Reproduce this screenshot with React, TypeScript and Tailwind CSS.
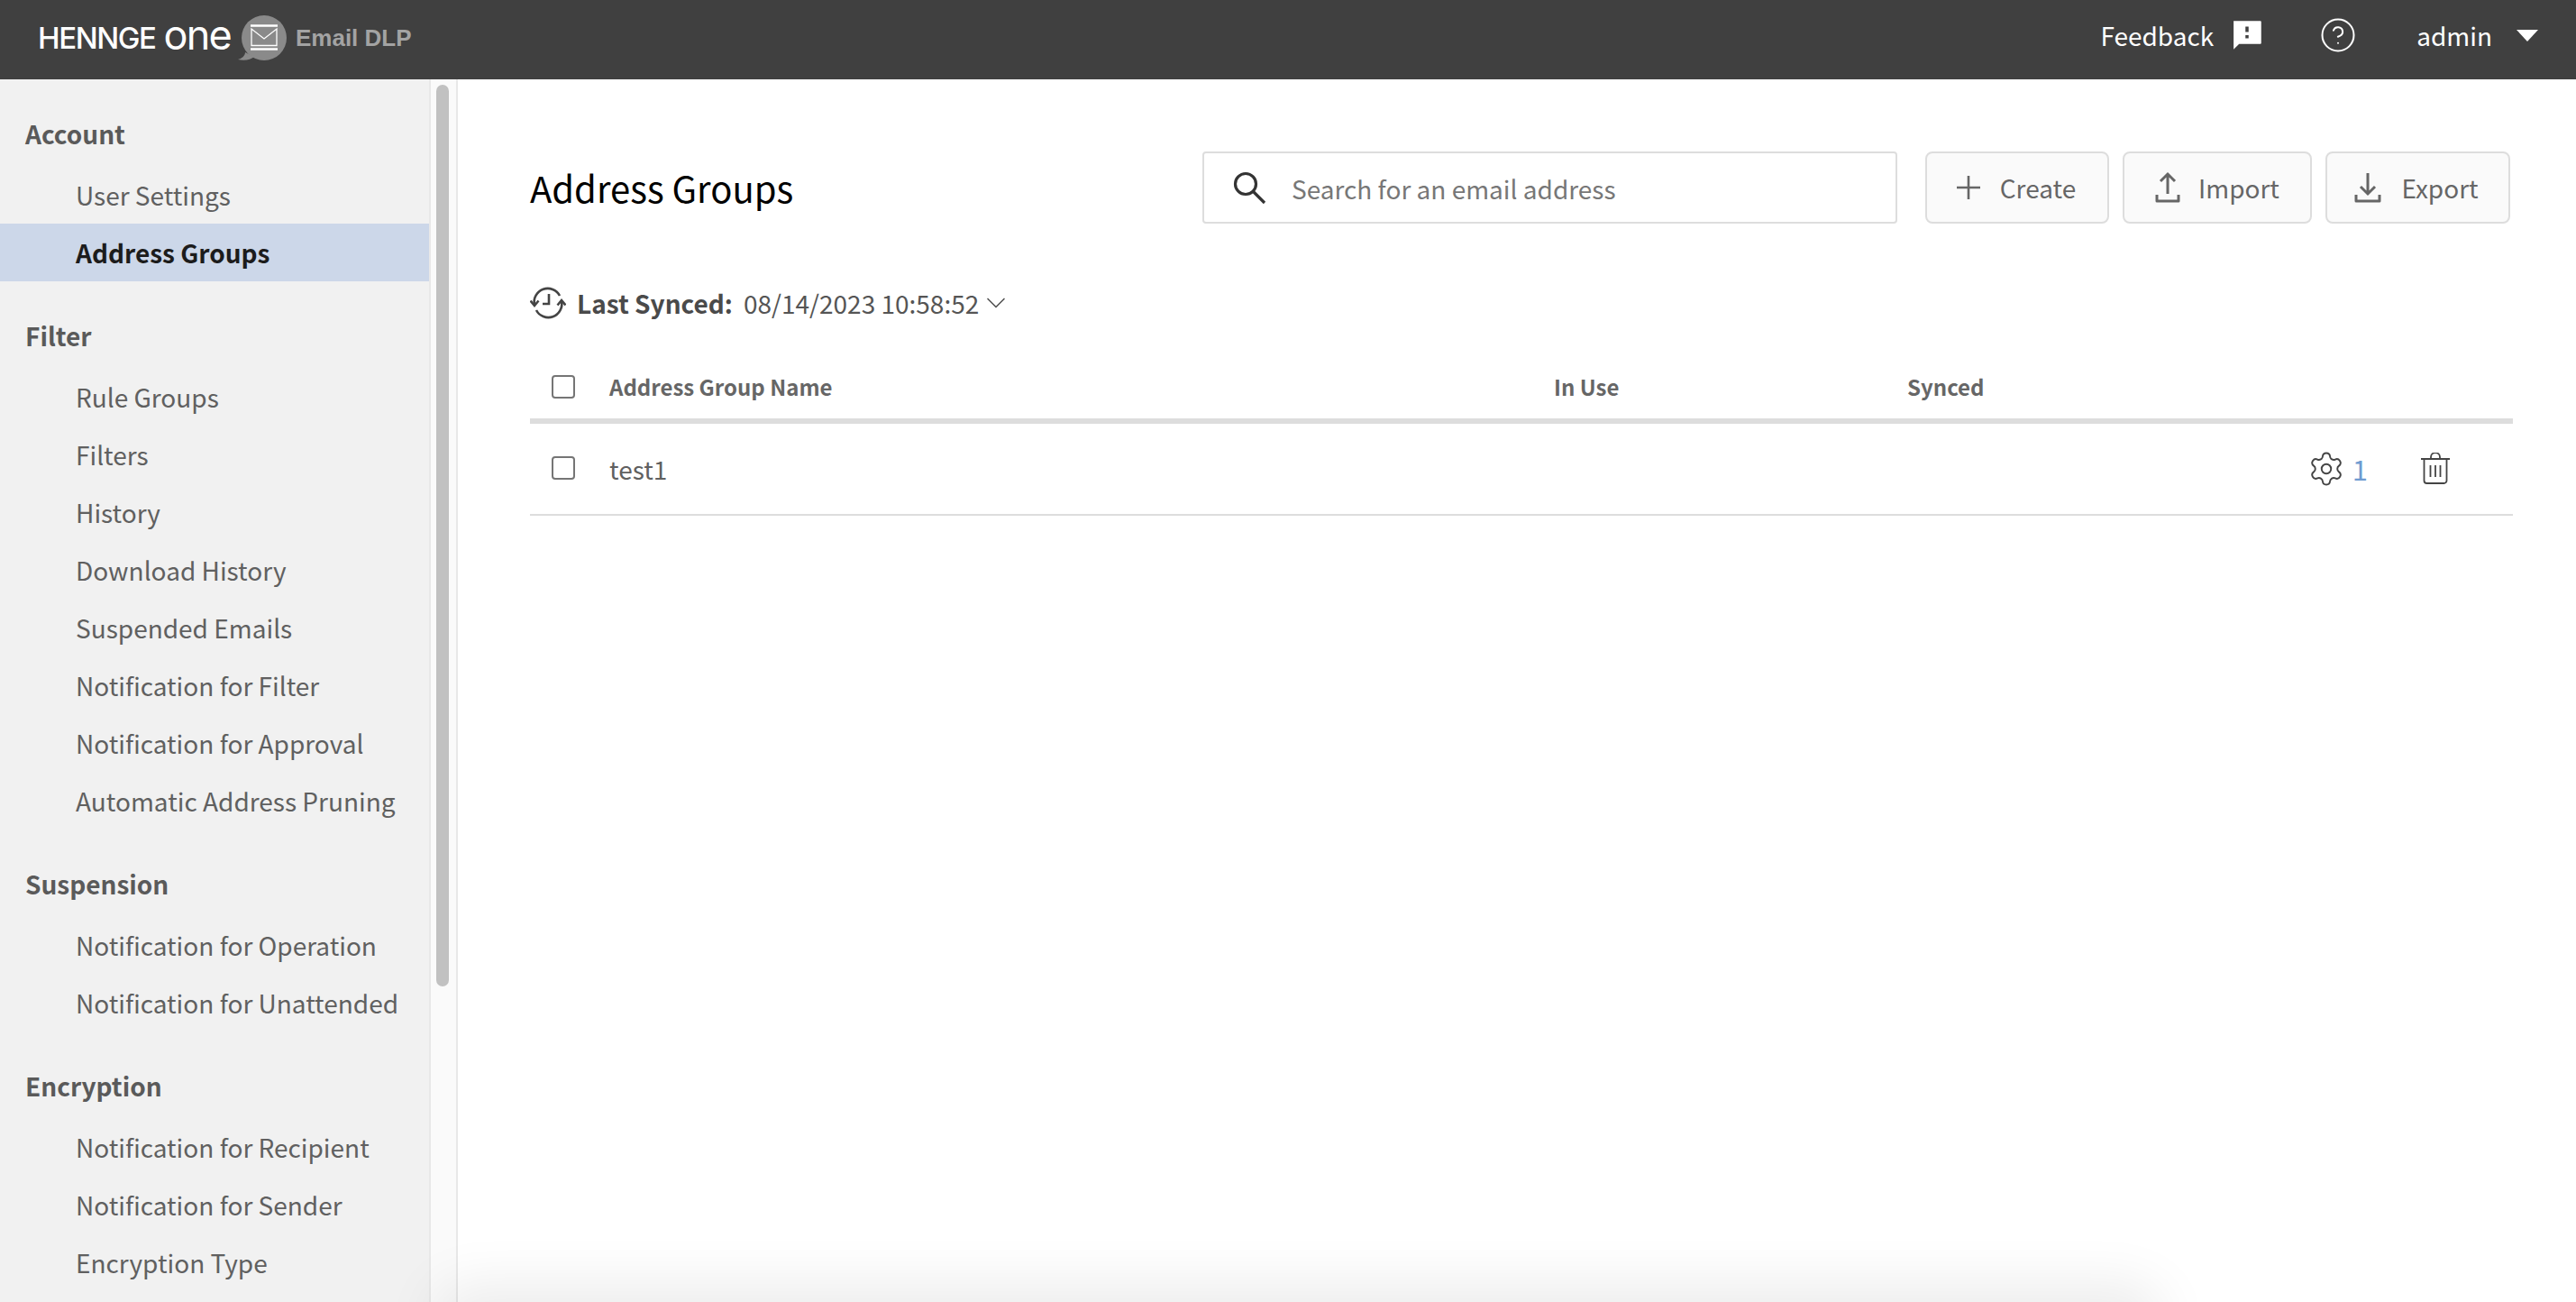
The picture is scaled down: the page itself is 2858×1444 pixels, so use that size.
import React from 'react'
import { ChevronDown, CircleHelp, Settings } from 'lucide-react'

const NAV = [
  { title: 'Account', items: ['User Settings', 'Address Groups'] },
  {
    title: 'Filter',
    items: [
      'Rule Groups',
      'Filters',
      'History',
      'Download History',
      'Suspended Emails',
      'Notification for Filter',
      'Notification for Approval',
      'Automatic Address Pruning',
    ],
  },
  { title: 'Suspension', items: ['Notification for Operation', 'Notification for Unattended'] },
  { title: 'Encryption', items: ['Notification for Recipient', 'Notification for Sender', 'Encryption Type'] },
]

const FONT = "font-['Noto_Sans_CJK_JP','Noto_Sans',sans-serif]"

const Logo = () => (
  <div className="flex items-center">
    <span className="font-['Inter',sans-serif] text-[33px] font-medium leading-none tracking-[-1.4px] text-white">HENNGE</span>
    <span className="ml-[9px] mt-[-7px] font-['Inter',sans-serif] text-[45px] font-normal leading-none tracking-[-1.8px] text-white">one</span>
    <svg width="54" height="54" viewBox="0 0 54 54" className="ml-[8px] mt-[2px]">
      <circle cx="29" cy="26" r="25" fill="#8a8a8a" />
      <path d="M8 42 C8 46 4 49 0 50 C8 52 14 50 18 47 Z" fill="#8a8a8a" />
      <path d="M14 12.5 H44 M14 38.5 H44" stroke="#fff" strokeWidth="2.6" />
      <path d="M15 16 V34.5 H43 V16 L29 27 Z" fill="none" stroke="#fff" strokeWidth="1.3" />
    </svg>
    <span className="ml-[10px] font-['Liberation_Sans',sans-serif] text-[26px] font-bold leading-none text-[#a3a3a3]">Email DLP</span>
  </div>
)

const Header = () => (
  <header className="flex h-[88px] shrink-0 items-center justify-between bg-[#404040] pb-[4px] pl-[42px] pr-[42px] text-white">
    <Logo />
    <div className="mb-[6px] flex items-center">
      <span className="text-[28px] leading-none">Feedback</span>
      <svg width="42" height="42" viewBox="0 0 24 24" fill="#fff" className="ml-[16px]">
        <path d="M20.5 3H3.5v18l3.500-3.500h13.500c.3 0 .5-.2.5-.5V3.500c0-.3-.2-.5-.5-.5zM13 14h-2v-2h2v2zm0-4h-2V6.500h2V10z" />
      </svg>
      <CircleHelp size={42} strokeWidth={1.15} className="ml-[59px]" />
      <span className="ml-[66px] text-[28px] leading-none">admin</span>
      <svg width="24" height="14" viewBox="0 0 24 14" fill="#fff" className="ml-[27px]">
        <path d="M0 1 H24 L12 14 Z" />
      </svg>
    </div>
  </header>
)

const Sidebar = () => (
  <aside className="flex w-[508px] shrink-0 overflow-hidden">
    <nav className="w-[476px] bg-[#f1f1f1] pt-[27px]">
      {NAV.map((group) => (
        <div key={group.title} className="mb-[27px]">
          <div className="mb-[3px] flex h-[66px] items-center pl-[28px] text-[28px] font-bold text-[#5a5a5a]">{group.title}</div>
          {group.items.map((item) =>
            item === 'Address Groups' ? (
              <div key={item} className="flex h-[64px] items-center bg-[#ccd7e9] pl-[84px] text-[28px] font-bold text-[#1c1c1c]">
                {item}
              </div>
            ) : (
              <div key={item} className="flex h-[64px] items-center pl-[84px] text-[28px] text-[#606060]">
                {item}
              </div>
            ),
          )}
        </div>
      ))}
    </nav>
    <div className="w-[32px] border-l-2 border-r-2 border-[#e8e8e8] bg-[#fafafa] pl-[6px] pt-[6px]">
      <div className="h-[1000px] w-[14px] rounded-full bg-[#c1c1c1]" />
    </div>
  </aside>
)

const ToolButton = ({ icon, label, width }: { icon: React.ReactNode; label: string; width: string }) => (
  <button className={`flex h-[80px] items-center justify-center gap-[20px] rounded-[8px] border-2 border-[#dddddd] bg-[#fafafa] text-[28px] text-[#666666] ${width}`}>
    {icon}
    {label}
  </button>
)

const Checkbox = () => <span className="block h-[26px] w-[26px] rounded-[4px] border-2 border-[#757575] bg-white" />

const AddressGroups = () => (
  <main className="relative flex-1 bg-white pl-[80px] pr-[70px] pt-[80px]">
    <div className="flex h-[80px] items-center">
      <h1 className="text-[40px] font-normal leading-none text-black">Address Groups</h1>
      <div className="ml-auto flex h-[80px] w-[771px] items-center rounded-[4px] border-2 border-[#dddddd] bg-white pl-[31px]">
        <svg width="38" height="38" viewBox="0 0 38 38" fill="none" stroke="#333" strokeWidth="3.2">
          <circle cx="15" cy="15" r="11.500" />
          <path d="M23.500 23.500 L36 36" />
        </svg>
        <span className="ml-[28px] pt-[2px] text-[28px] text-[#777777]">Search for an email address</span>
      </div>
      <div className="ml-[31px] mr-[3px] flex gap-[15px]">
        <ToolButton
          label="Create"
          width="w-[204px]"
          icon={
            <svg width="26" height="26" viewBox="0 0 26 26" stroke="#666" strokeWidth="2.600" className="ml-[-2px] mr-[2px]">
              <path d="M13 0 V26 M0 13 H26" />
            </svg>
          }
        />
        <ToolButton
          label="Import"
          width="w-[210px]"
          icon={
            <svg width="28" height="36" viewBox="0 0 28 36" fill="none" stroke="#666" strokeWidth="3">
              <path d="M14 25 V3 M6 11 L14 3 L22 11" />
              <path d="M2 26 V33 H26 V26" strokeLinejoin="round" />
            </svg>
          }
        />
        <ToolButton
          label="Export"
          width="w-[205px]"
          icon={
            <svg width="30" height="36" viewBox="0 0 30 36" fill="none" stroke="#666" strokeWidth="3" className="ml-[-3px] mr-[2px]">
              <path d="M15 2 V25 M7 17 L15 25 L23 17" />
              <path d="M2 26 V33 H28 V26" strokeLinejoin="round" />
            </svg>
          }
        />
      </div>
    </div>

    <div className="mt-[68px] flex h-[40px] items-center">
      <svg width="40" height="40" viewBox="0 0 40 40" fill="none" stroke="#444" strokeWidth="2.600">
        <path d="M5 22 A15 15 0 0 1 33 12" />
        <path d="M35 18 A15 15 0 0 1 7 28" />
        <path d="M0.500 17.500 L5 23 L9.500 17.500 M30.500 22.500 L35 17 L39.500 22.500" />
        <path d="M21 10 V21 H14" />
      </svg>
      <span className="ml-[12px] text-[28px] font-bold text-[#4a4a4a]">Last Synced:</span>
      <span className="ml-[12px] text-[28px] text-[#555555]">08/14/2023 10:58:52</span>
      <ChevronDown size={36} strokeWidth={1.1} color="#555" className="ml-[1px]" />
    </div>

    <div className="mt-[37px] grid h-[77px] grid-cols-[88px_1048px_392px_1fr] items-center border-b-[6px] border-[#dddddd] text-[24px] font-bold text-[#666666]">
      <span className="pl-[24px]">
        <Checkbox />
      </span>
      <span>Address Group Name</span>
      <span>In Use</span>
      <span>Synced</span>
    </div>
    <div className="grid h-[102px] grid-cols-[88px_1048px_392px_1fr] items-center border-b-2 border-[#dddddd] text-[28px] text-[#606060]">
      <span className="pb-[2px] pl-[24px]">
        <Checkbox />
      </span>
      <span>test1</span>
      <span />
      <span className="flex items-center justify-end pr-[69px]">
        <Settings size={42} strokeWidth={1.1} color="#444" />
        <span className="ml-[8px] text-[31px] text-[#6f9bd1]">1</span>
        <svg width="34" height="36" viewBox="0 0 34 36" fill="none" stroke="#444" strokeWidth="1.800" className="ml-[58px]">
          <path d="M1 7 H33 M12 7 V5 A5 5 0 0 1 22 5 V7" />
          <path d="M4.500 7 V31 A3 3 0 0 0 7.500 34 H26.500 A3 3 0 0 0 29.500 31 V7" />
          <path d="M11.500 14 V27 M17 14 V27 M22.500 14 V27" />
        </svg>
      </span>
    </div>
  </main>
)

export default function App() {
  return (
    <div className={`relative flex h-screen flex-col overflow-hidden bg-white ${FONT}`}>
      <Header />
      <div className="flex min-h-0 flex-1">
        <Sidebar />
        <AddressGroups />
      </div>
      {/* footer bar sits below the fold, only its shadow shows */}
      <div className="absolute left-[500px] top-[1444px] h-[40px] w-[1880px] rounded-[30px] shadow-[0_0_60px_20px_rgba(0,0,0,0.08)]" />
    </div>
  )
}
